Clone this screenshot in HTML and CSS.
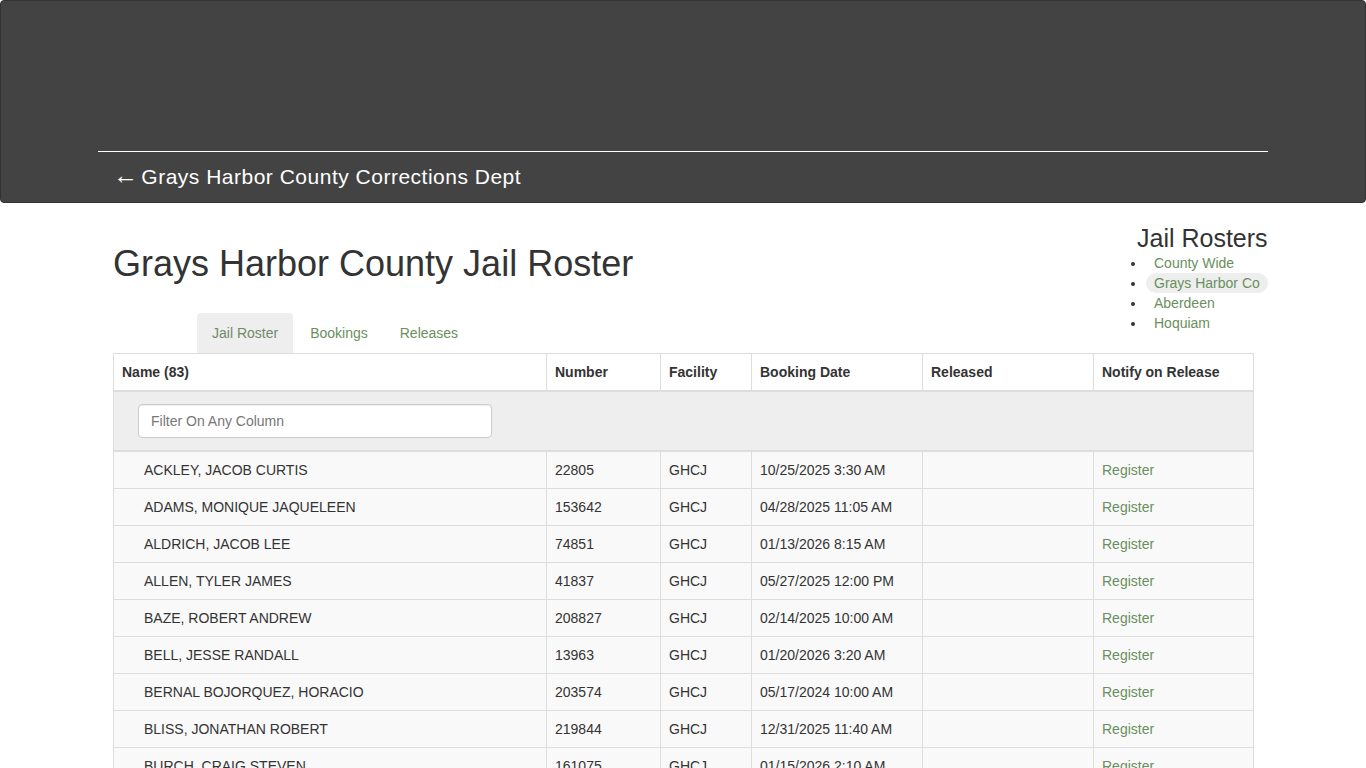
FILE: index.html
```html
<!DOCTYPE html>
<html>
<head>
<meta charset="utf-8">
<title>Grays Harbor County Jail Roster</title>
<link rel="stylesheet" href="styles.css">
</head>
<body>
<header class="banner">
  <div class="banner-inner">
    <div class="banner-rule"></div>
    <a class="banner-title" href="#"><span class="arrow">&larr;</span> Grays Harbor County Corrections Dept</a>
  </div>
</header>
<main class="container">
  <div class="top-row">
    <div class="top-left">
      <h1 class="page-title">Grays Harbor County Jail Roster</h1>
      <ul class="tabs">
        <li class="tab active"><a href="#">Jail Roster</a></li>
        <li class="tab"><a href="#">Bookings</a></li>
        <li class="tab"><a href="#">Releases</a></li>
      </ul>
    </div>
    <aside class="rosters">
      <h3 class="rosters-title">Jail Rosters</h3>
      <ul class="rosters-list">
        <li><a href="#">County Wide</a></li>
        <li><a href="#" class="current">Grays Harbor Co</a></li>
        <li><a href="#">Aberdeen</a></li>
        <li><a href="#">Hoquiam</a></li>
      </ul>
    </aside>
  </div>
  <table class="roster">
    <colgroup>
      <col class="c-name"><col class="c-num"><col class="c-fac"><col class="c-date"><col class="c-rel"><col class="c-notify">
    </colgroup>
    <thead>
      <tr><th>Name (83)</th><th>Number</th><th>Facility</th><th>Booking Date</th><th>Released</th><th>Notify on Release</th></tr>
      <tr class="filter-row"><td colspan="6"><input class="filter" type="text" placeholder="Filter On Any Column"></td></tr>
    </thead>
    <tbody>
      <tr><td class="name">ACKLEY, JACOB CURTIS</td><td>22805</td><td>GHCJ</td><td>10/25/2025 3:30 AM</td><td></td><td><a href="#">Register</a></td></tr>
      <tr><td class="name">ADAMS, MONIQUE JAQUELEEN</td><td>153642</td><td>GHCJ</td><td>04/28/2025 11:05 AM</td><td></td><td><a href="#">Register</a></td></tr>
      <tr><td class="name">ALDRICH, JACOB LEE</td><td>74851</td><td>GHCJ</td><td>01/13/2026 8:15 AM</td><td></td><td><a href="#">Register</a></td></tr>
      <tr><td class="name">ALLEN, TYLER JAMES</td><td>41837</td><td>GHCJ</td><td>05/27/2025 12:00 PM</td><td></td><td><a href="#">Register</a></td></tr>
      <tr><td class="name">BAZE, ROBERT ANDREW</td><td>208827</td><td>GHCJ</td><td>02/14/2025 10:00 AM</td><td></td><td><a href="#">Register</a></td></tr>
      <tr><td class="name">BELL, JESSE RANDALL</td><td>13963</td><td>GHCJ</td><td>01/20/2026 3:20 AM</td><td></td><td><a href="#">Register</a></td></tr>
      <tr><td class="name">BERNAL BOJORQUEZ, HORACIO</td><td>203574</td><td>GHCJ</td><td>05/17/2024 10:00 AM</td><td></td><td><a href="#">Register</a></td></tr>
      <tr><td class="name">BLISS, JONATHAN ROBERT</td><td>219844</td><td>GHCJ</td><td>12/31/2025 11:40 AM</td><td></td><td><a href="#">Register</a></td></tr>
      <tr><td class="name">BURCH, CRAIG STEVEN</td><td>161075</td><td>GHCJ</td><td>01/15/2026 2:10 AM</td><td></td><td><a href="#">Register</a></td></tr>
      <tr><td class="name">BUTLER, MICHAEL JAMES</td><td>98213</td><td>GHCJ</td><td>11/02/2025 6:45 PM</td><td></td><td><a href="#">Register</a></td></tr>
    </tbody>
  </table>
</main>
</body>
</html>
```

FILE: styles.css
```css
* { box-sizing: border-box; }
html, body {
  margin: 0;
  padding: 0;
  background: #fff;
  font-family: "Liberation Sans", Arial, Helvetica, sans-serif;
  font-size: 14px;
  line-height: 20px;
  color: #333;
}
a { color: #6a8f5d; text-decoration: none; }

.banner {
  height: 203px;
  background: #434343;
  border: 1px solid #333;
  border-radius: 4px;
}
.banner-inner {
  width: 1170px;
  margin: 0 auto;
  padding-top: 150px;
}
.banner-rule {
  border-top: 1px solid #fff;
}
.banner-title {
  display: block;
  padding: 11px 15px 0 15px;
  color: #fff;
  font-size: 21px;
  line-height: 26px;
  letter-spacing: 0.5px;
}
.banner-title .arrow {
  display: inline-block;
  width: 22px;
  font-size: 25px;
  line-height: 1;
  letter-spacing: 0;
}

.container {
  width: 1170px;
  margin: 0 auto;
  padding: 0 15px;
}
.top-row {
  display: flex;
  justify-content: space-between;
  align-items: flex-start;
}
.page-title {
  margin: 41px 0 0 0;
  font-size: 36px;
  line-height: 40px;
  font-weight: 500;
  color: #333;
}
.tabs {
  list-style: none;
  display: flex;
  margin: 29px 0 0 84px;
  padding: 0;
}
.tab + .tab { margin-left: 2px; }
.tab a {
  display: block;
  padding: 10px 15px;
  line-height: 20px;
  border-radius: 4px 4px 0 0;
}
.tab.active a {
  background: #eee;
  color: #74896a;
}

.rosters {
  width: 140px;
  margin: 22px -15px 0 0;
}
.rosters-title {
  margin: 0 0 2px 0;
  padding-left: 9px;
  font-size: 25px;
  line-height: 26px;
  font-weight: 500;
  color: #333;
  white-space: nowrap;
}
.rosters-list {
  margin: 0;
  padding-left: 18px;
  list-style: disc;
}
.rosters-list li { line-height: 20px; }
.rosters-list a {
  display: inline-block;
  padding: 0 8px;
  border-radius: 10px;
  white-space: nowrap;
}
.rosters-list a.current { background: #eee; }

.roster {
  width: 1140px;
  border-collapse: collapse;
  border: 1px solid #ddd;
  table-layout: fixed;
}
.c-name { width: 433px; }
.c-num { width: 114px; }
.c-fac { width: 91px; }
.c-date { width: 171px; }
.c-rel { width: 171px; }
.c-notify { width: 160px; }

.roster th {
  text-align: left;
  padding: 8px;
  line-height: 20px;
  border: 1px solid #ddd;
  border-bottom: 2px solid #ddd;
  font-weight: bold;
  background: #fff;
}
.filter-row td {
  background: #eee;
  padding: 12px 24px;
  border-bottom: 2px solid #ddd;
}
.filter {
  display: block;
  width: 354px;
  height: 34px;
  padding: 6px 12px;
  font-family: inherit;
  font-size: 14px;
  color: #555;
  background: #fff;
  border: 1px solid #ccc;
  border-radius: 4px;
  box-shadow: inset 0 1px 1px rgba(0,0,0,.075);
}
.filter::placeholder { color: #777; }
.roster tbody td {
  padding: 8px;
  line-height: 20px;
  border: 1px solid #ddd;
  background: #f9f9f9;
  white-space: nowrap;
  overflow: hidden;
}
.roster tbody td.name { padding-left: 30px; }
```
